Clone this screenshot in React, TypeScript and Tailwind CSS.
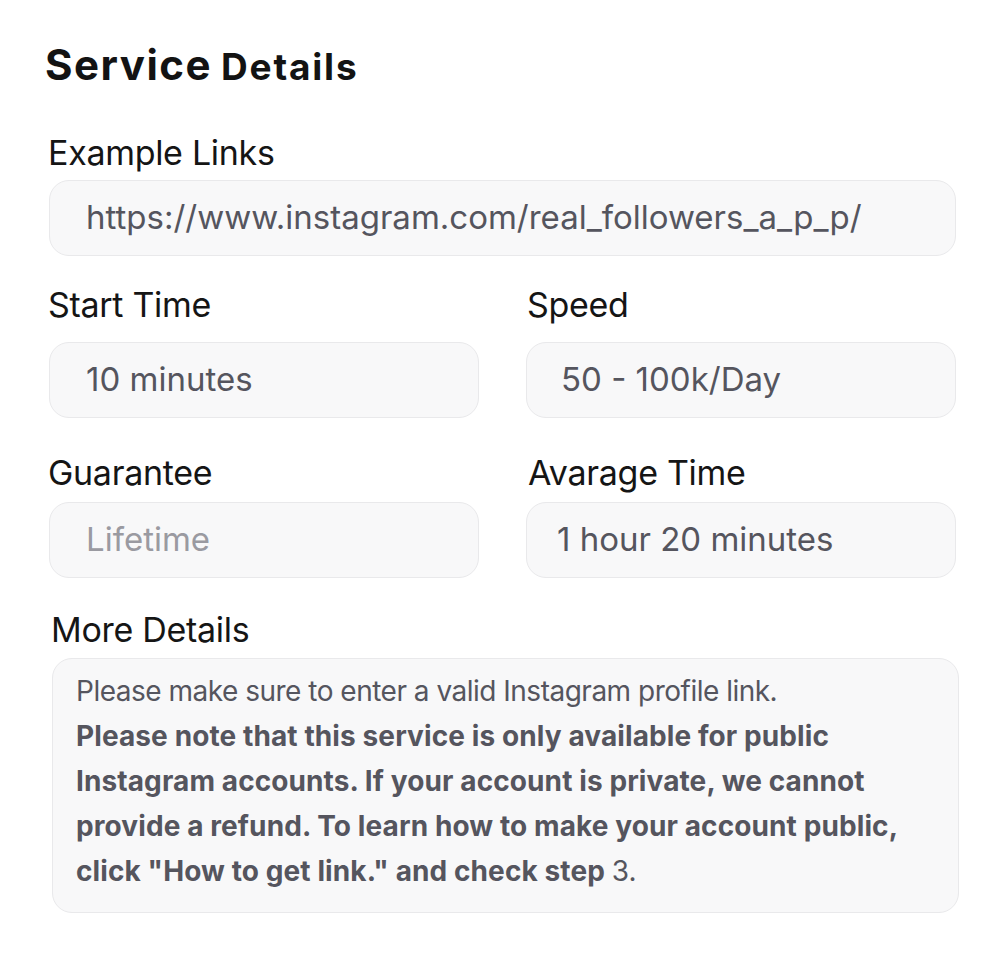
import React from "react";

function Label({ children, shift = "-ml-[1px]" }: { children: React.ReactNode; shift?: string }) {
  return (
    <div className={"text-[34px] leading-[36px] text-[#151515] tracking-[-0.3px] " + shift}>{children}</div>
  );
}

function Field({
  children,
  muted = false,
  pad = "pl-[36px]",
}: {
  children: React.ReactNode;
  muted?: boolean;
  pad?: string;
}) {
  return (
    <div
      className={
        "h-[76px] flex items-center rounded-[20px] border border-[#e9e9eb] bg-[#f8f8f9] pr-[20px] text-[33px] whitespace-nowrap " +
        pad +
        " " +
        (muted ? "text-[#9a9aa1]" : "text-[#55555e]")
      }
    >
      {children}
    </div>
  );
}

export default function App() {
  return (
    <div
      className="w-[1008px] h-[966px] bg-white"
      style={{ fontFamily: "Inter, 'Noto Sans', sans-serif" }}
    >
      <div className="pl-[46px] pr-[52px] pt-[41px] flex flex-col">
        <h1 className="flex items-baseline gap-[9px] font-bold text-[#131313] -ml-[1px]">
          <span className="text-[42px] leading-[48px] tracking-[1.5px]">Service</span>
          <span className="text-[37px] leading-[48px] tracking-[1.8px]">Details</span>
        </h1>

        <div className="mt-[44px] pl-[3px]">
          <Label>Example Links</Label>
          <div className="mt-[9px]">
            <Field>https://www.instagram.com/real_followers_a_p_p/</Field>
          </div>
        </div>

        <div className="mt-[31px] pl-[3px] grid grid-cols-2 gap-x-[47px]">
          <div>
            <Label>Start Time</Label>
            <div className="mt-[19px]">
              <Field>10 minutes</Field>
            </div>
          </div>
          <div>
            <Label shift="ml-[1px]">Speed</Label>
            <div className="mt-[19px]">
              <Field pad="pl-[34px]">50 - 100k/Day</Field>
            </div>
          </div>
        </div>

        <div className="mt-[37px] pl-[3px] grid grid-cols-2 gap-x-[47px]">
          <div>
            <Label>Guarantee</Label>
            <div className="mt-[11px]">
              <Field muted>Lifetime</Field>
            </div>
          </div>
          <div>
            <Label shift="ml-[2px]">Avarage Time</Label>
            <div className="mt-[11px]">
              <Field pad="pl-[30px]">1 hour 20 minutes</Field>
            </div>
          </div>
        </div>

        <div className="mt-[34px] pl-[6px] -mr-[3px]">
          <Label>More Details</Label>
          <div className="mt-[10px] h-[255px] rounded-[20px] border border-[#e9e9eb] bg-[#f8f8f9] pl-[23px] pr-[20px] pt-[10px] text-[28px] leading-[45px] text-[#55555e] whitespace-nowrap">
            <p className="tracking-[-0.5px]">Please make sure to enter a valid Instagram profile link.</p>
            <p className="font-bold tracking-[0.1px]">
              Please note that this service is only available for public
              <br />
              Instagram accounts. If your account is private, we cannot
              <br />
              provide a refund. To learn how to make your account public,
              <br />
              click "How to get link." and check step{" "}
              <span className="font-normal">3.</span>
            </p>
          </div>
        </div>
      </div>
    </div>
  );
}
